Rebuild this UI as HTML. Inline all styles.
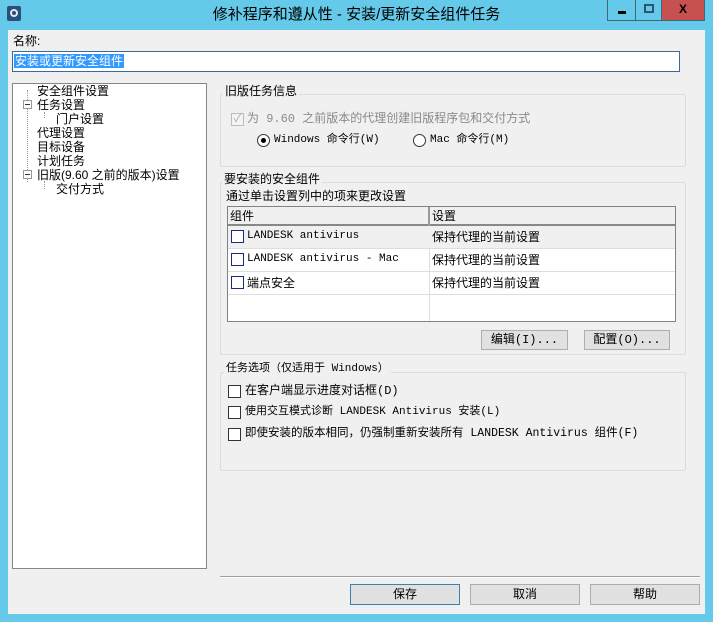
<!DOCTYPE html>
<html><head><meta charset="utf-8"><style>
*{box-sizing:border-box;margin:0;padding:0}
body{width:713px;height:622px;background:#65c9e9;position:relative;overflow:hidden;font-family:"Liberation Sans","Noto Sans CJK SC",sans-serif;font-size:12px;color:#000}
.a{position:absolute}
.client{left:8px;top:30px;width:697px;height:584px;background:#f0f0f0}
.mono{font-family:"Liberation Mono","Noto Sans CJK SC",monospace;font-size:11px}
.gb{border:1px solid #dcdcdc;border-radius:2px}
.lbl{background:#f0f0f0;padding:0 2px;line-height:14px}
.btn{border:1px solid #adadad;background:#e1e1e1;text-align:center;line-height:18px}
.cb{width:13px;height:13px;border:1px solid #333;background:#fff}
.t{line-height:14px;white-space:nowrap}
</style></head><body>
<div class="a" style="left:7px;top:6px;width:14px;height:15px;background:#2a4f7a;border-radius:2px"><div class="a" style="left:3px;top:3px;width:8px;height:8px;border:2px solid #dfe8f0;border-radius:50%"></div></div>
<div class="a t" style="left:0;width:713px;top:6px;text-align:center;font-size:15px;line-height:18px">修补程序和遵从性 - 安装/更新安全组件任务</div>
<div class="a" style="left:607px;top:0;width:29px;height:21px;border:1px solid #3b6a80;border-top:0"><div class="a" style="left:10px;top:11px;width:8px;height:3px;background:#000"></div></div>
<div class="a" style="left:635px;top:0;width:27px;height:21px;border:1px solid #3b6a80;border-top:0"><div class="a" style="left:8px;top:4px;width:10px;height:9px;border:2px solid #2b5570"></div></div>
<div class="a" style="left:661px;top:0;width:44px;height:21px;background:#c75050;border:1px solid #3b6a80;border-top:0;text-align:center;font-weight:bold;font-size:12px;line-height:19px">X</div>
<div class="a client"></div>
<div class="a t" style="left:13px;top:34px">名称:</div>
<div class="a" style="left:12px;top:51px;width:668px;height:21px;border:1px solid #3c6a93;background:#fff"><span class="a t" style="left:1px;top:2px;background:#3399ff;color:#fff;padding:0 1px">安装或更新安全组件</span></div>
<div class="a" style="left:12px;top:83px;width:195px;height:486px;border:1px solid #828790;background:#fff"></div>
<div class="a" style="left:27px;top:90px;height:92px;border-left:1px dotted #999"></div>
<div class="a" style="left:44px;top:112px;height:6px;border-left:1px dotted #999"></div>
<div class="a" style="left:44px;top:181px;height:8px;border-left:1px dotted #999"></div>
<div class="a t" style="left:37px;top:84px;background:#fff">安全组件设置</div>
<div class="a t" style="left:37px;top:98px">任务设置</div>
<div class="a t" style="left:56px;top:112px">门户设置</div>
<div class="a t" style="left:37px;top:126px">代理设置</div>
<div class="a t" style="left:37px;top:140px">目标设备</div>
<div class="a t" style="left:37px;top:154px">计划任务</div>
<div class="a t" style="left:37px;top:168px">旧版(9.60 之前的版本)设置</div>
<div class="a t" style="left:56px;top:182px">交付方式</div>
<div class="a" style="left:23px;top:100px;width:9px;height:9px;border:1px solid #999;background:#fff"><div class="a" style="left:1px;top:3px;width:5px;height:1px;background:#333"></div></div>
<div class="a" style="left:23px;top:170px;width:9px;height:9px;border:1px solid #999;background:#fff"><div class="a" style="left:1px;top:3px;width:5px;height:1px;background:#333"></div></div>
<div class="a gb" style="left:220px;top:94px;width:466px;height:73px"></div>
<div class="a lbl" style="left:223px;top:84px">旧版任务信息</div>
<div class="a cb" style="left:231px;top:113px;border-color:#bbb;background:#f4f4f4;color:#aaa;font-size:11px;line-height:11px;text-align:center">✓</div>
<div class="a t mono" style="left:247px;top:112px;color:#8a8a8a;font-size:12px">为 9.60 之前版本的代理创建旧版程序包和交付方式</div>
<div class="a" style="left:257px;top:134px;width:13px;height:13px;border:1px solid #333;border-radius:50%;background:#fff"><div class="a" style="left:3px;top:3px;width:5px;height:5px;border-radius:50%;background:#000"></div></div>
<div class="a t mono" style="left:274px;top:133px">Windows 命令行(W)</div>
<div class="a" style="left:413px;top:134px;width:13px;height:13px;border:1px solid #333;border-radius:50%;background:#fff"></div>
<div class="a t mono" style="left:430px;top:133px">Mac 命令行(M)</div>
<div class="a gb" style="left:220px;top:182px;width:466px;height:173px"></div>
<div class="a lbl" style="left:222px;top:172px">要安装的安全组件</div>
<div class="a t" style="left:226px;top:189px">通过单击设置列中的项来更改设置</div>
<div class="a" style="left:227px;top:206px;width:449px;height:116px;border:1px solid #828282;background:#fff"></div>
<div class="a" style="left:228px;top:207px;width:447px;height:19px;background:#f0f0f0;border-bottom:2px solid #888"></div>
<div class="a" style="left:428px;top:207px;width:2px;height:19px;background:#999"></div>
<div class="a" style="left:429px;top:226px;width:1px;height:95px;background:#ddd"></div>
<div class="a" style="left:228px;top:226px;width:447px;height:22px;background:#f0f0f0"></div>
<div class="a" style="left:228px;top:248px;width:447px;height:1px;background:#ddd"></div>
<div class="a" style="left:228px;top:271px;width:447px;height:1px;background:#ddd"></div>
<div class="a" style="left:228px;top:294px;width:447px;height:1px;background:#ddd"></div>
<div class="a t" style="left:230px;top:209px">组件</div>
<div class="a t" style="left:432px;top:209px">设置</div>
<div class="a cb" style="left:231px;top:230px;border-color:#1c2a7c"></div>
<div class="a t mono" style="left:247px;top:229px">LANDESK antivirus</div>
<div class="a t" style="left:432px;top:230px">保持代理的当前设置</div>
<div class="a cb" style="left:231px;top:253px;border-color:#1c2a7c"></div>
<div class="a t mono" style="left:247px;top:252px">LANDESK antivirus - Mac</div>
<div class="a t" style="left:432px;top:253px">保持代理的当前设置</div>
<div class="a cb" style="left:231px;top:276px;border-color:#1c2a7c"></div>
<div class="a t" style="left:247px;top:276px">端点安全</div>
<div class="a t" style="left:432px;top:276px">保持代理的当前设置</div>
<div class="a btn mono" style="left:481px;top:330px;width:87px;height:20px;font-size:12px">编辑(I)...</div>
<div class="a btn mono" style="left:584px;top:330px;width:86px;height:20px;font-size:12px">配置(O)...</div>
<div class="a gb" style="left:220px;top:372px;width:466px;height:99px"></div>
<div class="a lbl mono" style="left:224px;top:362px">任务选项（仅适用于 Windows）</div>
<div class="a cb" style="left:228px;top:385px"></div>
<div class="a t mono" style="left:245px;top:384px;font-size:12px">在客户端显示进度对话框(D)</div>
<div class="a cb" style="left:228px;top:406px"></div>
<div class="a t mono" style="left:245px;top:405px">使用交互模式诊断 LANDESK Antivirus 安装(L)</div>
<div class="a cb" style="left:228px;top:428px"></div>
<div class="a t mono" style="left:245px;top:427px;font-size:11.5px">即使安装的版本相同，仍强制重新安装所有 LANDESK Antivirus 组件(F)</div>
<div class="a" style="left:220px;top:576px;width:480px;height:1px;background:#a0a0a0"></div>
<div class="a" style="left:220px;top:577px;width:480px;height:1px;background:#fff"></div>
<div class="a btn" style="left:350px;top:584px;width:110px;height:21px;border-color:#3c7fb1">保存</div>
<div class="a btn" style="left:470px;top:584px;width:110px;height:21px">取消</div>
<div class="a btn" style="left:590px;top:584px;width:110px;height:21px">帮助</div>
</body></html>
